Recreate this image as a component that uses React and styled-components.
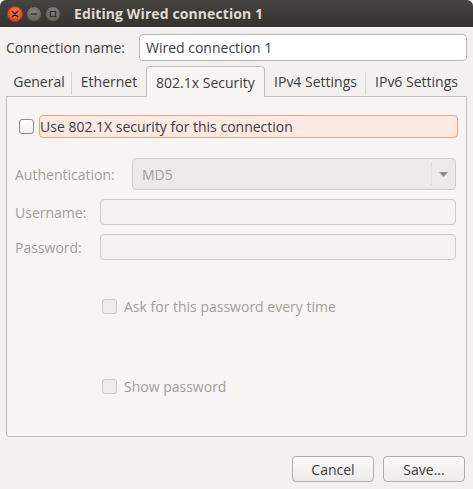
import React from 'react';
import styled, { createGlobalStyle } from 'styled-components';

const GlobalStyle = createGlobalStyle`
  html, body {
    margin: 0;
    padding: 0;
    background: #f2f1f0;
  }
  body {
    font-family: "Open Sans", "Noto Sans", "DejaVu Sans", sans-serif;
    font-size: 14px;
    color: #3c3c3c;
  }
`;

const Window = styled.div`
  width: 473px;
  height: 489px;
  display: flex;
  flex-direction: column;
  background: #f2f1f0;
  overflow: hidden;
`;

const TitleBar = styled.div`
  height: 27px;
  flex: none;
  display: flex;
  align-items: center;
  padding-left: 7px;
  gap: 3px;
  background: linear-gradient(#45443f, #34332f);
  border-radius: 6px 6px 0 0;
`;

const WinButton = styled.div`
  width: 16px;
  height: 16px;
  border-radius: 50%;
  display: flex;
  align-items: center;
  justify-content: center;
  background: ${({ close }) =>
    close
      ? 'radial-gradient(circle at 50% 35%, #f58a5e, #e0461c 70%)'
      : 'radial-gradient(circle at 50% 35%, #8a8882, #64625d 70%)'};
  border: 1px solid ${({ close }) => (close ? '#b83a14' : '#3e3d39')};
  box-sizing: border-box;
`;

const Title = styled.div`
  margin-left: 10px;
  color: #dfdbd2;
  font-weight: 700;
  font-size: 14px;
  letter-spacing: 0.1px;
`;

const Body = styled.div`
  flex: 1;
  display: flex;
  flex-direction: column;
  padding: 7px 6px 0 6px;
`;

const NameRow = styled.div`
  display: flex;
  align-items: center;
  height: 27px;
`;

const Label = styled.span`
  color: ${({ disabled }) => (disabled ? '#a29e98' : '#3c3c3c')};
  width: ${({ w }) => (w ? w + 'px' : 'auto')};
  flex: none;
  font-size: 14px;
`;

const TextInput = styled.div`
  flex: 1;
  height: ${({ h }) => h || 27}px;
  box-sizing: border-box;
  border: 1px solid ${({ disabled }) => (disabled ? '#cfccc8' : '#b9b5b0')};
  border-radius: 4px;
  background: ${({ disabled }) => (disabled ? '#f3f2f1' : '#ffffff')};
  display: flex;
  align-items: center;
  padding-left: 6px;
  font-size: 14px;
  color: #3c3c3c;
`;

const Notebook = styled.div`
  margin-top: 5px;
  flex: none;
  display: flex;
  flex-direction: column;
`;

const TabBar = styled.div`
  display: flex;
  align-items: flex-end;
  height: 30px;
`;

const Tab = styled.div`
  width: ${({ w }) => w}px;
  box-sizing: border-box;
  height: 28px;
  display: flex;
  align-items: center;
  justify-content: center;
  font-size: 14px;
  color: #3c3c3c;
  position: relative;
  ${({ active }) =>
    active
      ? `
    background: #f6f5f4;
    border: 1px solid #c2beb9;
    border-bottom: none;
    border-radius: 4px 4px 0 0;
    margin-bottom: -1px;
    height: 31px;
    z-index: 1;
  `
      : `
    border-bottom: 1px solid transparent;
  `}
  ${({ sep }) =>
    sep
      ? `
    &::after {
      content: '';
      position: absolute;
      right: 0;
      top: 4px;
      bottom: 0;
      width: 1px;
      background: #d5d2ce;
    }
  `
      : ''}
`;

const Panel = styled.div`
  height: 341px;
  box-sizing: border-box;
  border: 1px solid #c2beb9;
  border-radius: 0 0 3px 3px;
  background: #f6f5f4;
  padding: 0 8px 0 8px;
  display: flex;
  flex-direction: column;
`;

const CheckRow = styled.div`
  display: flex;
  align-items: center;
  margin-top: ${({ mt }) => mt}px;
  margin-left: ${({ ml }) => ml || 0}px;
  height: 23px;
`;

const Box = styled.div`
  width: 15px;
  height: 15px;
  box-sizing: border-box;
  border: 1px solid ${({ disabled }) => (disabled ? '#cbc8c4' : '#8f8b86')};
  border-radius: 3px;
  background: ${({ disabled }) =>
    disabled ? '#eeedeb' : 'linear-gradient(#ffffff, #f0efee)'};
  flex: none;
`;

const FocusLabel = styled.div`
  margin-left: 5px;
  flex: 1;
  height: 23px;
  box-sizing: border-box;
  border: 1px solid #f3a081;
  border-radius: 4px;
  background: #fbe9e2;
  display: flex;
  align-items: center;
  padding-left: 0;
  font-size: 14px;
  color: #3c3c3c;
`;

const CheckText = styled.span`
  margin-left: 7px;
  font-size: 14px;
  color: #a29e98;
`;

const FieldRow = styled.div`
  display: flex;
  align-items: center;
  margin-top: ${({ mt }) => mt}px;
  padding-right: 2px;
`;

const Combo = styled.div`
  flex: 1;
  height: 32px;
  box-sizing: border-box;
  border: 1px solid #cfccc8;
  border-radius: 4px;
  background: #ebeae9;
  display: flex;
  align-items: center;
  padding-left: 9px;
  font-size: 14px;
  color: #a29e98;
`;

const ComboText = styled.span`
  flex: 1;
`;

const ComboArrow = styled.div`
  width: 23px;
  align-self: stretch;
  margin: 4px 0;
  border-left: 1px dotted #d6d3cf;
  display: flex;
  align-items: center;
  justify-content: center;
`;

const ButtonRow = styled.div`
  display: flex;
  justify-content: flex-end;
  gap: 9px;
  margin-top: 19px;
  padding-right: 2px;
`;

const Button = styled.div`
  width: 82px;
  height: 26px;
  box-sizing: border-box;
  border: 1px solid #b1ada7;
  border-radius: 4px;
  background: linear-gradient(#fbfbfa, #ecebea);
  display: flex;
  align-items: center;
  justify-content: center;
  font-size: 14px;
  color: #3c3c3c;
`;

const tabs = [
  { label: 'General', w: 66, sep: true },
  { label: 'Ethernet', w: 74 },
  { label: '802.1x Security', w: 119, active: true },
  { label: 'IPv4 Settings', w: 101, sep: true },
  { label: 'IPv6 Settings', w: 101 },
];

const App = () => (
  <>
    <GlobalStyle />
    <Window>
      <TitleBar>
        <WinButton close>
          <svg width="8" height="8" viewBox="0 0 8 8">
            <path d="M1.5 1.5l5 5M6.5 1.5l-5 5" stroke="#3a1a0c" strokeWidth="1.6" strokeLinecap="round" />
          </svg>
        </WinButton>
        <WinButton>
          <svg width="8" height="8" viewBox="0 0 8 8">
            <path d="M1 4h6" stroke="#34332f" strokeWidth="1.5" />
          </svg>
        </WinButton>
        <WinButton>
          <svg width="8" height="8" viewBox="0 0 8 8">
            <rect x="1.5" y="1.5" width="5" height="5" fill="none" stroke="#34332f" strokeWidth="1.3" />
          </svg>
        </WinButton>
        <Title>Editing Wired connection 1</Title>
      </TitleBar>
      <Body>
        <NameRow>
          <Label w={133}>Connection name:</Label>
          <TextInput>Wired connection 1</TextInput>
        </NameRow>
        <Notebook>
          <TabBar>
            {tabs.map((t) => (
              <Tab key={t.label} w={t.w} active={t.active} sep={t.sep}>
                {t.label}
              </Tab>
            ))}
          </TabBar>
          <Panel>
            <CheckRow mt={18} ml={4}>
              <Box />
              <FocusLabel>Use 802.1X security for this connection</FocusLabel>
            </CheckRow>
            <FieldRow mt={20}>
              <Label disabled w={117}>Authentication:</Label>
              <Combo>
                <ComboText>MD5</ComboText>
                <ComboArrow>
                  <svg width="9" height="5" viewBox="0 0 9 5">
                    <path d="M0 0h9L4.5 5z" fill="#8e8a85" />
                  </svg>
                </ComboArrow>
              </Combo>
            </FieldRow>
            <FieldRow mt={9}>
              <Label disabled w={85}>Username:</Label>
              <TextInput disabled h={26} />
            </FieldRow>
            <FieldRow mt={9}>
              <Label disabled w={85}>Password:</Label>
              <TextInput disabled h={26} />
            </FieldRow>
            <CheckRow mt={35} ml={87}>
              <Box disabled />
              <CheckText>Ask for this password every time</CheckText>
            </CheckRow>
            <CheckRow mt={57} ml={87}>
              <Box disabled />
              <CheckText>Show password</CheckText>
            </CheckRow>
          </Panel>
        </Notebook>
        <ButtonRow>
          <Button>Cancel</Button>
          <Button>Save...</Button>
        </ButtonRow>
      </Body>
    </Window>
  </>
);

export default App;
